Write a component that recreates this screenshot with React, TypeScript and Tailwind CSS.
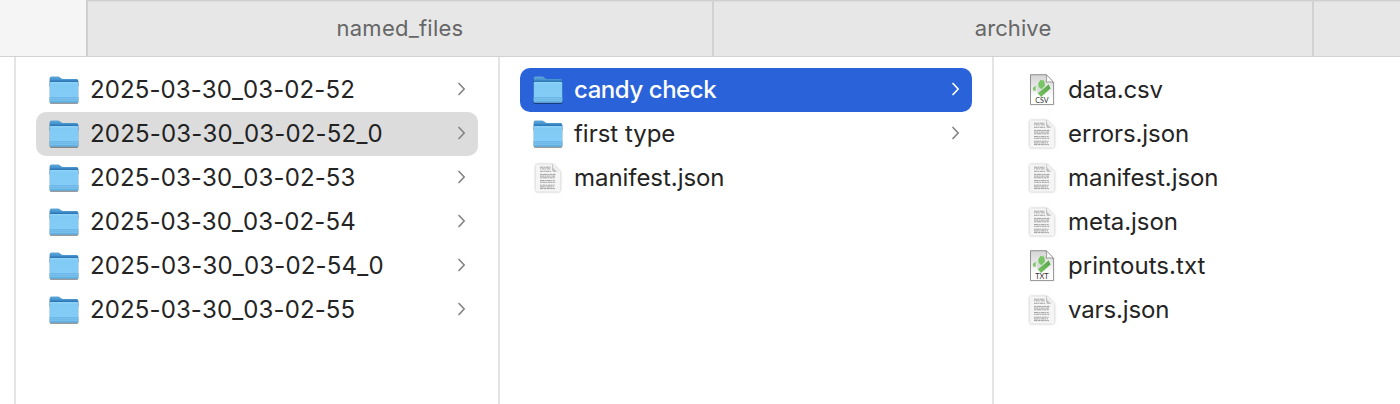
import { useId } from "react";

type Kind = "folder" | "json" | "CSV" | "TXT";
type Entry = { name: string; kind: Kind; tracking: string; state?: "active" | "open" };

const runs: Entry[] = [
  { name: "2025-03-30_03-02-52", kind: "folder", tracking: "tracking-[0.1px] [font-kerning:none]" },
  { name: "2025-03-30_03-02-52_0", kind: "folder", tracking: "tracking-[0.18px] [font-kerning:none]", state: "open" },
  { name: "2025-03-30_03-02-53", kind: "folder", tracking: "tracking-[0.12px] [font-kerning:none]" },
  { name: "2025-03-30_03-02-54", kind: "folder", tracking: "tracking-[0.1px] [font-kerning:none]" },
  { name: "2025-03-30_03-02-54_0", kind: "folder", tracking: "tracking-[0.18px] [font-kerning:none]" },
  { name: "2025-03-30_03-02-55", kind: "folder", tracking: "tracking-[0.12px] [font-kerning:none]" },
];

const groups: Entry[] = [
  { name: "candy check", kind: "folder", tracking: "tracking-[-0.44px] font-medium", state: "active" },
  { name: "first type", kind: "folder", tracking: "tracking-[-0.02px]" },
  { name: "manifest.json", kind: "json", tracking: "tracking-[-0.05px]" },
];

const files: Entry[] = [
  { name: "data.csv", kind: "CSV", tracking: "tracking-[-0.2px]" },
  { name: "errors.json", kind: "json", tracking: "tracking-[-0.1px]" },
  { name: "manifest.json", kind: "json", tracking: "tracking-[-0.05px]" },
  { name: "meta.json", kind: "json", tracking: "tracking-[-0.06px]" },
  { name: "printouts.txt", kind: "TXT", tracking: "tracking-[0.05px]" },
  { name: "vars.json", kind: "json", tracking: "tracking-[-0.13px]" },
];

function FolderIcon() {
  const id = useId();
  return (
    <svg width="32" height="32" viewBox="0 0 32 32" className="drop-shadow-[0_1px_0.7px_rgba(0,0,0,0.45)]">
      <defs>
        <linearGradient id={id + "b"} x1="0" y1="0" x2="0" y2="1">
          <stop offset="0" stopColor="#62aadb" />
          <stop offset="0.35" stopColor="#4594cd" />
          <stop offset="0.5" stopColor="#2f78b8" />
        </linearGradient>
        <linearGradient id={id + "f"} x1="0" y1="0" x2="0" y2="1">
          <stop offset="0" stopColor="#93d4f9" />
          <stop offset="0.12" stopColor="#80caf4" />
          <stop offset="1" stopColor="#84cdf8" />
        </linearGradient>
      </defs>
      <path d="M1.7 4.2Q1.7 2.4 3.4 2.4H9.8Q11 2.4 12 3.3L13 4.2Q14 5 15.2 5H28.6Q30.3 5 30.3 6.8V12H1.7Z" fill={`url(#${id}b)`} />
      <path d="M1.7 9.2Q1.7 8 3 8H29Q30.3 8 30.3 9.2V27Q30.3 28.6 28.7 28.6H3.3Q1.7 28.6 1.7 27Z" fill={`url(#${id}f)`} />
      <path d="M1.7 24H30.3V27Q30.3 28.6 28.7 28.6H3.3Q1.7 28.6 1.7 27Z" fill="#77c0ed" />
      <path d="M1.7 23.5H30.3" stroke="#67b3e1" strokeWidth="0.8" />
      <path d="M2.2 28H29.8" stroke="#559fce" strokeWidth="1" />
      <path d="M1.9 25.5H30.1" stroke="#68b4e3" strokeWidth="0.6" />
    </svg>
  );
}

function JsonIcon() {
  const id = useId();
  return (
    <svg width="32" height="32" viewBox="0 0 32 32" className="drop-shadow-[0_0.5px_0.8px_rgba(0,0,0,0.32)]">
      <defs>
        <linearGradient id={id + "c"} x1="0" y1="1" x2="1" y2="0">
          <stop offset="0.15" stopColor="#b9b9b9" />
          <stop offset="0.45" stopColor="#fbfbfb" />
        </linearGradient>
      </defs>
      <path d="M3.7 3.8Q3.7 2.2 5.3 2.2H20.6L28.4 10V28Q28.4 29.8 26.6 29.8H5.3Q3.7 29.8 3.7 28Z" fill="#f5f5f5" />
      <g stroke="#a0a0a0" strokeWidth="1">
        <path d="M8 5.2H18.7M8 9.3H19.4" strokeDasharray="3.4 .3 1.7 .4" />
        <path d="M8 6.9H18.9" strokeDasharray="1.2 .7 2.8 .5" />
        <path d="M8 12.4H23.5M8 15.8H22.8" strokeDasharray="2.6 .5 4.1 .4 1.3 .5" />
        <path d="M8 14.1H23.6" strokeDasharray="1 .4 3.2 .6" />
        <path d="M8 18.6H22.7M8 24.9H22" strokeDasharray="4.2 .4 1.3 .6" />
        <path d="M8 20.3H23.3M8 23.2H22.7" strokeDasharray="1.7 .6 2.9 .3" />
        <path d="M8 26.6H23" strokeDasharray="3.2 .5 2.4 .5" />
      </g>
      <path d="M20.6 2.2V8.5Q20.6 10 22.1 10H28.4Z" fill={`url(#${id}c)`} />
      <path d="M20.6 2.2V8.5" stroke="#b0b0b0" strokeWidth="0.7" />
    </svg>
  );
}

function TextFileIcon({ label }: { label: string }) {
  const id = useId();
  return (
    <svg width="32" height="32" viewBox="0 0 32 32">
      <defs>
        <linearGradient id={id + "p"} x1="0" y1="0" x2="0" y2="1">
          <stop offset="0" stopColor="#d4d4d4" />
          <stop offset="0.45" stopColor="#ebebeb" />
          <stop offset="0.75" stopColor="#fff" />
        </linearGradient>
        <linearGradient id={id + "g"} x1="1" y1="0" x2="0" y2="1">
          <stop offset="0" stopColor="#56a447" />
          <stop offset="1" stopColor="#79c665" />
        </linearGradient>
      </defs>
      <path d="M4.5 .7H20Q23.8 4.2 27.6 8.5V30.6H4.5Z" fill={`url(#${id}p)`} stroke="#858585" strokeWidth="0.9" />
      <path d="M12.2 9.4L14.4 6L18.2 6.4L19 11.8L15.4 15.6L12.4 12.8Z" fill="#79c668" />
      <path d="M6.8 14L9.7 11.4V17L7.3 16.5Z" fill="#7bc76b" />
      <path d="M10 11.2L12.2 12.8L15.6 15.8L11.8 20Z" fill="#d9dcd9" />
      <path d="M22.6 10.4L24.6 14.6L15 23L11.8 19.2Z" fill={`url(#${id}g)`} />
      <path d="M20 .7Q21.4 4.5 20.2 8.2Q24 7.2 27.6 8.7Q24.4 3.8 20 .7Z" fill="#fff" stroke="#888" strokeWidth="0.8" />
      <text x="16" y="29" textAnchor="middle" textLength="13.4" lengthAdjust="spacingAndGlyphs" fontFamily="Lato, sans-serif" fontSize="8" fill="#303030">
        {label}
      </text>
    </svg>
  );
}

function Chevron({ active }: { active: boolean }) {
  return (
    <svg width="8" height="14" viewBox="0 0 8 14" fill="none" className={active ? "mb-0.5 text-white" : "mb-0.5 text-[#858585]"}>
      <path d="M1 1.5L6.2 7L1 12.5" stroke="currentColor" strokeWidth="1.7" strokeLinecap="round" strokeLinejoin="round" />
    </svg>
  );
}

function Row({ entry }: { entry: Entry }) {
  const active = entry.state === "active";
  const tone = active ? "bg-[#2962d9] text-white" : entry.state === "open" ? "bg-[#dcdcdc] text-[#222]" : "text-[#242424]";
  return (
    <li className={`flex h-11 items-center rounded-[10px] pl-3 pr-3 ${tone}`}>
      <span className="mr-[10px] w-8 shrink-0">
        {entry.kind === "folder" ? <FolderIcon /> : entry.kind === "json" ? <JsonIcon /> : <TextFileIcon label={entry.kind} />}
      </span>
      <span className={`grow whitespace-nowrap text-[24px] leading-[44px] ${entry.tracking}`}>{entry.name}</span>
      {entry.kind === "folder" && <Chevron active={active} />}
    </li>
  );
}

function Column({ entries, className }: { entries: Entry[]; className: string }) {
  return (
    <ul className={`shrink-0 border-l-2 border-[#e4e4e4] pl-5 pr-5 pt-[11px] ${className}`}>
      {entries.map((entry) => (
        <Row key={entry.name} entry={entry} />
      ))}
    </ul>
  );
}

export default function App() {
  return (
    <div className="flex h-[404px] w-[1400px] flex-col overflow-hidden bg-white font-['Inter',sans-serif]">
      <header className="flex h-[57px] shrink-0 border-b border-[#d2d2d2] text-[22px] leading-[56px] text-[#666]">
        <div className="w-[86px] bg-[#f5f5f5]" />
        <div className="flex grow bg-[linear-gradient(#c3c3c3_0px,#dcdcdc_1px,#e7e7e7_3px)]">
          <div className="w-[626px] border-l-2 border-[#cfcfcf] text-center">
            <span className="tracking-[0.25px]">named_files</span>
          </div>
          <div className="w-[600px] border-l-2 border-[#d2d2d2] text-center">
            <span className="tracking-[0.1px]">archive</span>
          </div>
          <div className="grow border-l-2 border-[#d2d2d2]" />
        </div>
      </header>
      <main className="flex grow pl-[14px]">
        <Column entries={runs} className="w-[484px]" />
        <Column entries={groups} className="w-[494px]" />
        <Column entries={files} className="w-[408px]" />
      </main>
    </div>
  );
}
